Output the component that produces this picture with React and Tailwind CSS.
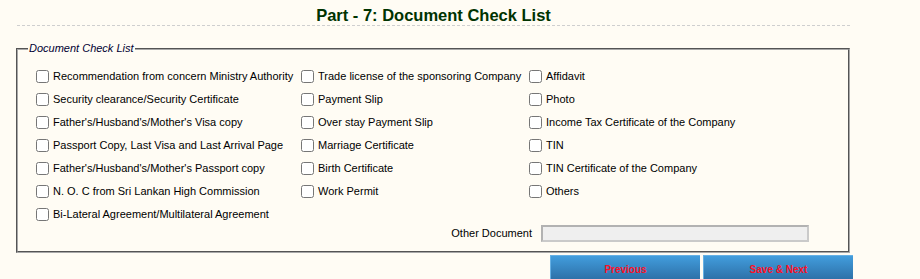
import React from 'react';

const rows = [
    ['Recommendation from concern Ministry Authority', 'Trade license of the sponsoring Company', 'Affidavit'],
    ['Security clearance/Security Certificate', 'Payment Slip', 'Photo'],
    ["Father's/Husband's/Mother's Visa copy", 'Over stay Payment Slip', 'Income Tax Certificate of the Company'],
    ['Passport Copy, Last Visa and Last Arrival Page', 'Marriage Certificate', 'TIN'],
    ["Father's/Husband's/Mother's Passport copy", 'Birth Certificate', 'TIN Certificate of the Company'],
    ['N. O. C from Sri Lankan High Commission', 'Work Permit', 'Others'],
    ['Bi-Lateral Agreement/Multilateral Agreement'],
];

const CheckItem = ({ label }) => (
    <label className="flex items-center h-[23px] whitespace-nowrap">
        <input type="checkbox" className="ml-[4px] mr-[4px] w-[13px] h-[13px]" />
        <span>{label}</span>
    </label>
);

export default function App() {
    return (
        <div className="min-h-screen bg-[#fffcf4] font-['Liberation_Sans',Arial,sans-serif] text-[11px] text-black">
            <div className="ml-[16px] w-[834px]">
                {/* Title */}
                <div className="ml-[1px] pt-[5px] border-b border-dashed border-[#cfcfcf]">
                    <h2 className="text-center text-[16.5px] leading-[20px] font-bold text-[#003300]">
                        Part - 7: Document Check List
                    </h2>
                </div>

                {/* Check list */}
                <fieldset className="mt-[16px] border-2 [border-style:groove] border-[#a8a8a8] pl-[10px] pr-[39px] pt-[10px] pb-[9px]">
                    <legend className="px-[1px] italic leading-[13px] text-[#000033]">Document Check List</legend>
                    <div className="grid grid-cols-[265px_228px_1fr] pl-[4px]">
                        {rows.map((row, i) =>
                            [0, 1, 2].map((j) =>
                                row[j] ? <CheckItem key={`${i}-${j}`} label={row[j]} /> : <div key={`${i}-${j}`} />
                            )
                        )}
                    </div>
                    <div className="flex items-center justify-end gap-[9px] -mt-[1.5px]">
                        <span>Other Document</span>
                        <input
                            type="text"
                            disabled
                            className="w-[268px] h-[17px] bg-[#efefef] border-2 border-[#b2b2b2] border-b-[#cacaca] border-r-[#cacaca]"
                        />
                    </div>
                </fieldset>
            </div>

            {/* Navigation */}
            <div className="flex gap-[3px] ml-[550px] mt-[2px]">
                <button className="w-[150px] h-[28px] bg-gradient-to-b from-[#429ddd] to-[#2a6aa0] border-l border-t border-[#66b0e4] text-[10px] font-bold text-[#ff1025]">
                    Previous
                </button>
                <button className="w-[150px] h-[28px] bg-gradient-to-b from-[#429ddd] to-[#2a6aa0] border-l border-t border-[#66b0e4] text-[10px] font-bold text-[#ff1025]">
                    Save &amp; Next
                </button>
            </div>
        </div>
    );
}
